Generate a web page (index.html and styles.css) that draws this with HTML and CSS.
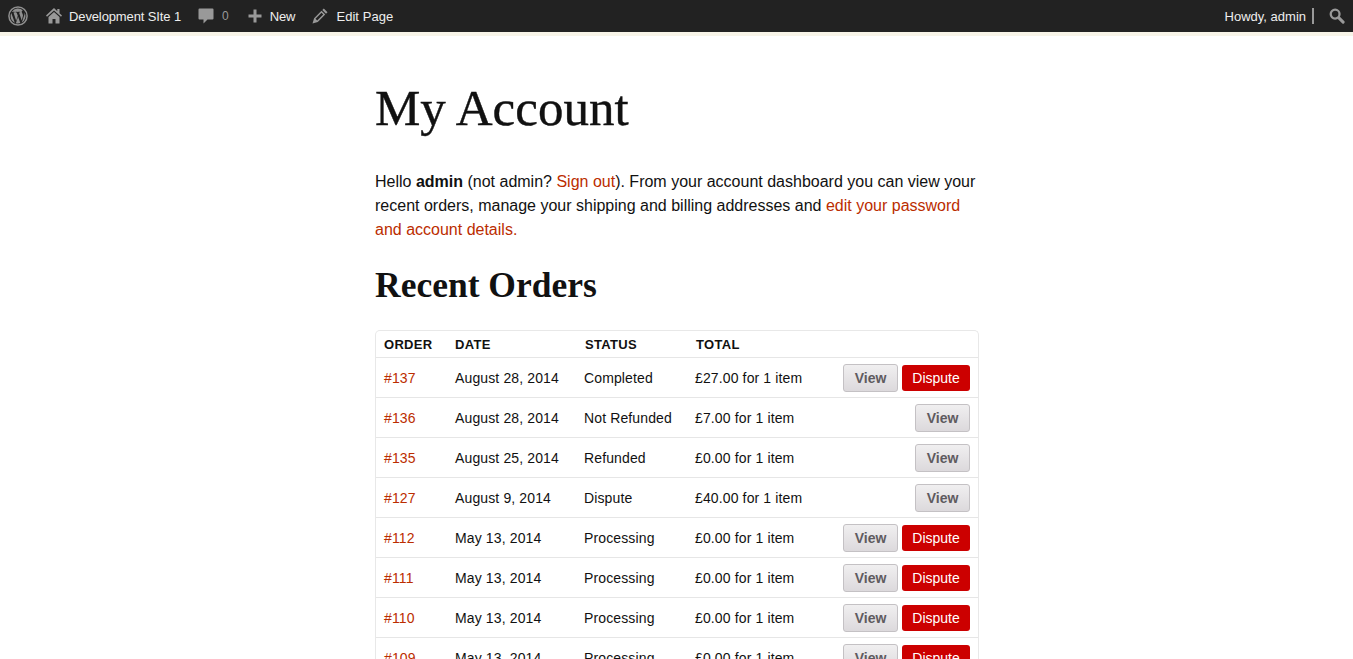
FILE: index.html
```html
<!DOCTYPE html>
<html lang="en">
<head>
<meta charset="utf-8">
<title>My Account</title>
<link rel="stylesheet" href="styles.css">
</head>
<body>
<header class="adminbar">
  <nav class="bar-left">
    <a class="bar-item wp"><svg width="20" height="20" viewBox="0 0 20 20"><circle cx="10" cy="10" r="9.100" fill="none" stroke="#8f8f8f" stroke-width="1.500"/><path fill="#8f8f8f" d="M2.600 10a7.400 7.400 0 0 0 4.200 6.700L3.300 7A7.400 7.400 0 0 0 2.600 10zM15 9.600c0-.9-.3-1.600-.6-2.100-.4-.6-.7-1.100-.7-1.700 0-.7.5-1.300 1.200-1.300h.1A7.400 7.400 0 0 0 3.800 5.900h.5c.8 0 2-.1 2-.1.400 0 .5.600.1.600 0 0-.4.100-.9.100l2.700 8.200 1.600-4.900-1.200-3.300c-.4 0-.8-.1-.8-.1-.4 0-.4-.6 0-.6 0 0 1.200.1 2 .1.800 0 2-.1 2-.1.400 0 .5.600.1.600 0 0-.4.100-.9.100l2.700 8 .7-2.500c.3-1 .6-1.700.6-2.400zM10.100 10.700l-2.200 6.500a7.400 7.400 0 0 0 4.500-.1l-.1-.1zM16.500 6.400c0 .2.100.5.100.8 0 .7-.1 1.600-.6 2.700l-2.200 6.500a7.400 7.400 0 0 0 2.700-10z"/></svg></a>
    <a class="bar-item site"><svg width="16" height="16" viewBox="0 0 16 16"><path fill="#999" d="M8 0 0 7.500 1 8.800 8 2.600l7 6.200 1-1.300-2.500-2.300V1h-2.200v2.200z"/><path fill="#999" d="M8 4 2.500 9v6.500H6.500v-4.500h3v4.500h4V9z"/></svg><span>Development SIte 1</span></a>
    <a class="bar-item comments"><svg width="16" height="16" viewBox="0 0 16 16"><path fill="#999" d="M1.500 .5h13a1 1 0 0 1 1 1v9a1 1 0 0 1-1 1H9.500L5.500 15.500v-4h-4a1 1 0 0 1-1-1v-9a1 1 0 0 1 1-1z"/></svg><span class="count">0</span></a>
    <a class="bar-item new"><svg width="14" height="14" viewBox="0 0 14 14"><path fill="#999" d="M5.500 .5h3v5h5v3h-5v5h-3v-5h-5v-3h5z"/></svg><span>New</span></a>
    <a class="bar-item edit"><svg width="16" height="16" viewBox="0 0 16 16"><path fill="#999" d="M11.800 .5 15.500 4.200 14 5.700 10.300 2zM9.500 2.800 13.200 6.500 5.800 13.900 .5 15.500 2.100 10.200zM3.500 10.800l1.700 1.700 6-6-1.700-1.700z"/></svg><span>Edit Page</span></a>
  </nav>
  <div class="bar-right">
    <span class="howdy">Howdy, admin</span>
    <span class="divider"></span>
    <svg class="search" width="16" height="16" viewBox="0 0 17 17"><circle cx="6.500" cy="6.500" r="4.700" fill="none" stroke="#999" stroke-width="2.400"/><path stroke="#999" stroke-width="3.200" stroke-linecap="round" d="M10.500 10.500l4.500 4.500"/></svg>
  </div>
</header>
<div class="strip"></div>
<main class="content">
  <h1>My Account</h1>
  <p class="intro">Hello <strong>admin</strong> (not admin? <a>Sign out</a>). From your account dashboard you can view your recent orders, manage your shipping and billing addresses and <a>edit your password and account details.</a></p>
  <h2>Recent Orders</h2>
  <div class="orders">
    <div class="row head"><span>ORDER</span><span>DATE</span><span>STATUS</span><span>TOTAL</span><span></span></div>
    <div class="row"><a>#137</a><span>August 28, 2014</span><span>Completed</span><span>£27.00 for 1 item</span><span class="acts"><b class="btn view">View</b><b class="btn dispute">Dispute</b></span></div>
    <div class="row"><a>#136</a><span>August 28, 2014</span><span>Not Refunded</span><span>£7.00 for 1 item</span><span class="acts"><b class="btn view">View</b></span></div>
    <div class="row"><a>#135</a><span>August 25, 2014</span><span>Refunded</span><span>£0.00 for 1 item</span><span class="acts"><b class="btn view">View</b></span></div>
    <div class="row"><a>#127</a><span>August 9, 2014</span><span>Dispute</span><span>£40.00 for 1 item</span><span class="acts"><b class="btn view">View</b></span></div>
    <div class="row"><a>#112</a><span>May 13, 2014</span><span>Processing</span><span>£0.00 for 1 item</span><span class="acts"><b class="btn view">View</b><b class="btn dispute">Dispute</b></span></div>
    <div class="row"><a>#111</a><span>May 13, 2014</span><span>Processing</span><span>£0.00 for 1 item</span><span class="acts"><b class="btn view">View</b><b class="btn dispute">Dispute</b></span></div>
    <div class="row"><a>#110</a><span>May 13, 2014</span><span>Processing</span><span>£0.00 for 1 item</span><span class="acts"><b class="btn view">View</b><b class="btn dispute">Dispute</b></span></div>
    <div class="row"><a>#109</a><span>May 13, 2014</span><span>Processing</span><span>£0.00 for 1 item</span><span class="acts"><b class="btn view">View</b><b class="btn dispute">Dispute</b></span></div>
  </div>
</main>
</body>
</html>
```
FILE: styles.css
```css
* { box-sizing: border-box; }
html, body { margin: 0; height: 659px; overflow: hidden; }
body { background: #fff; color: #111; font-family: "Liberation Sans", Arial, sans-serif; }

.adminbar { display: flex; justify-content: space-between; align-items: center; height: 32px; background: #222; color: #eee; font-size: 13px; }
.bar-left { display: flex; align-items: center; }
.bar-item { display: flex; align-items: center; gap: 7px; }
.wp { margin-left: 8px; }
.site { margin-left: 18px; }
.site span { letter-spacing: -.12px; }
.comments { margin-left: 17px; }
.count { margin-left: 1px; color: #999; font-size: 12px; }
.new { margin-left: 19px; gap: 8px; }
.new span { letter-spacing: -.1px; }
.edit { margin-left: 17px; gap: 8px; }
.edit span { letter-spacing: .05px; }
.bar-right { display: flex; align-items: center; }
.divider { width: 2px; height: 16px; background: #999; margin: 0 15px 0 6px; }
.search { margin-right: 8px; }
.strip { height: 4px; background: #f7f4e8; }

.content { width: 604px; margin-left: 375px; }
h1 { margin: 43px 0 0; font: 400 51px/58px "Liberation Serif", "DejaVu Serif", serif; color: #111; -webkit-text-stroke: .4px #111; }
.intro { margin: 33px 0 0; font-size: 16px; line-height: 24px; }
.intro a { color: #bb2d00; }
h2 { margin: 23px 0 0; font: 700 35.500px/40px "Liberation Serif", "DejaVu Serif", serif; color: #111; }
.orders { margin-top: 25px; border: 1px solid #e8e8e8; border-bottom: 0; border-radius: 5px 5px 0 0; }
.row { display: grid; grid-template-columns: 71px 129px 111px 1fr auto; align-items: center; height: 40px; padding: 0 8px; font-size: 14px; letter-spacing: .13px; border-top: 1px solid #e6e6e6; }
.row a { color: #bb2d00; }
.head { grid-template-columns: 71px 130px 111px 1fr auto; height: 26px; border-top: 0; font-size: 13px; font-weight: 700; letter-spacing: .3px; }
.acts { display: flex; justify-content: flex-end; gap: 4px; letter-spacing: 0; }
.btn { display: block; height: 26px; line-height: 26px; border-radius: 3px; text-align: center; }
.view { width: 55px; height: 28px; line-height: 26px; border: 1px solid #c4c1c4; background: linear-gradient(#f0eff0, #dcd9dc); color: #5f5b5f; }
.dispute { width: 68px; margin-top: 1px; background: #c00; color: #fff; font-weight: 400; }
```
